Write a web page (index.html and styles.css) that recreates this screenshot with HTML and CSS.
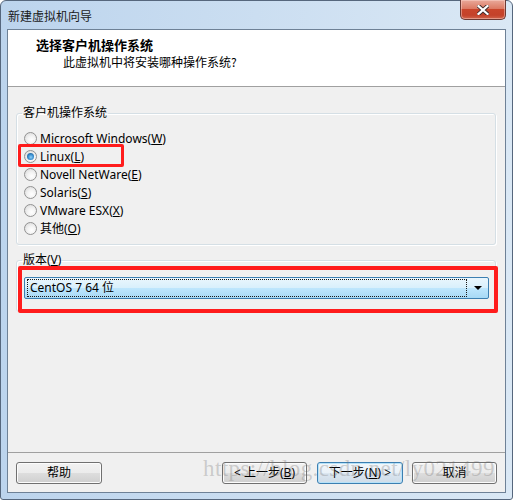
FILE: index.html
```html
<!DOCTYPE html>
<html lang="zh-CN">
<head>
<meta charset="utf-8">
<title>新建虚拟机向导</title>
<link rel="stylesheet" href="styles.css">
</head>
<body>
<div class="window">
  <div class="titlebar">
    <span class="title">新建虚拟机向导</span>
    <div class="close">
      <svg width="12" height="10" viewBox="0 0 12 10"><path d="M1.5 1 L10.5 9 M10.5 1 L1.5 9" stroke="#3b2a2a" stroke-width="4" stroke-linecap="square"/><path d="M1.5 1 L10.5 9 M10.5 1 L1.5 9" stroke="#ffffff" stroke-width="2.2" stroke-linecap="square"/></svg>
    </div>
  </div>
  <div class="client">
    <div class="header">
      <div class="h-title">选择客户机操作系统</div>
      <div class="h-sub">此虚拟机中将安装哪种操作系统?</div>
    </div>
    <div class="body">
      <fieldset class="group os">
        <legend>客户机操作系统</legend>
        <div class="radio"><span class="rb"></span>Microsoft Windows(<u>W</u>)</div>
        <div class="radio"><span class="rb checked"></span>Linux(<u>L</u>)</div>
        <div class="radio"><span class="rb"></span>Novell NetWare(<u>E</u>)</div>
        <div class="radio"><span class="rb"></span>Solaris(<u>S</u>)</div>
        <div class="radio"><span class="rb"></span>VMware ESX(<u>X</u>)</div>
        <div class="radio"><span class="rb"></span>其他(<u>O</u>)</div>
      </fieldset>
      <fieldset class="group ver">
        <legend>版本(<u>V</u>)</legend>
        <div class="combo">
          <div class="combo-text">CentOS 7 64 位</div>
          <div class="combo-arrow"></div>
        </div>
      </fieldset>
    </div>
    <div class="footer">
      <button class="btn help">帮助</button>
      <button class="btn prev">&lt; 上一步(<u>B</u>)</button>
      <button class="btn next">下一步(<u>N</u>) &gt;</button>
      <button class="btn cancel">取消</button>
    </div>
  </div>
  <div class="mark mark-linux"></div>
  <div class="mark mark-version"></div>
  <div class="watermark">https://blog.csdn.net/ly021499</div>
</div>
</body>
</html>
```
FILE: styles.css
```css
* { box-sizing: border-box; }
html, body { margin: 0; padding: 0; }
body {
  width: 513px;
  height: 500px;
  overflow: hidden;
  background: #ffffff;
  font-family: "Noto Sans", "Noto Sans CJK SC", sans-serif;
  font-size: 12px;
  color: #000;
}
.window {
  position: relative;
  width: 513px;
  height: 500px;
  display: flex;
  flex-direction: column;
  background: linear-gradient(to right, #bcd4ed, #dae8f5);
  border: 1px solid #56677d;
  border-radius: 6px 6px 3px 3px;
  padding: 0 6px 6px 6px;
}
.titlebar {
  height: 28px;
  display: flex;
  align-items: center;
  padding-left: 1px;
}
.title {
  font-family: "Noto Sans CJK SC", sans-serif;
  font-size: 12px;
  line-height: 14px;
  padding-top: 1px;
  color: #1a1a1a;
}
.close {
  margin-left: auto;
  align-self: flex-start;
  margin-top: -1px;
  width: 46px;
  height: 20px;
  border: 1px solid #6b3a34;
  border-top: none;
  border-radius: 0 0 5px 5px;
  background: linear-gradient(#e9a99a 0%, #dc7a64 45%, #c9452b 50%, #c4422a 80%, #d0654c 100%);
  box-shadow: inset 0 0 0 1px rgba(255, 220, 210, 0.45);
  display: flex;
  align-items: center;
  justify-content: center;
}
.client {
  flex: 1;
  display: flex;
  flex-direction: column;
  border: 1px solid #6e8196;
  background: #f0f0f0;
}
.header {
  height: 57px;
  background: #ffffff;
  border-bottom: 1px solid #a0a0a0;
  padding: 6px 0 0 28px;
}
.h-title {
  font-family: "Noto Sans CJK SC", sans-serif;
  font-weight: bold;
  font-size: 13px;
  line-height: 17px;
}
.h-sub {
  font-family: "Noto Sans CJK SC", sans-serif;
  font-size: 12px;
  line-height: 16px;
  margin-top: 1px;
  padding-left: 27px;
}
.body {
  flex: 1;
  padding: 19px 9px 0 8px;
}
.group {
  margin: 0;
  border: 1px solid #d5dfe5;
  border-radius: 3px;
  box-shadow: inset 1px 1px 0 #ffffff, 1px 1px 0 #ffffff;
  min-width: 0;
}
.group legend {
  padding: 0 1px;
  margin-left: -2px;
  font-size: 12px;
  line-height: 14px;
  color: #000;
}
.os {
  padding: 9px 6px 7px 7px;
}
.ver {
  margin-top: 8px;
  padding: 10px 6px 12px 7px;
}
.radio {
  height: 18px;
  display: flex;
  align-items: center;
  white-space: nowrap;
}
.rb {
  width: 13px;
  height: 13px;
  margin-right: 3px;
  border-radius: 50%;
  border: 1px solid #929292;
  background: radial-gradient(circle at 60% 65%, #ffffff 0%, #f3f3f3 40%, #d4d4d4 100%);
  display: flex;
  align-items: center;
  justify-content: center;
}
.rb.checked::after {
  content: "";
  width: 7px;
  height: 7px;
  border-radius: 50%;
  background: radial-gradient(circle at 55% 60%, #8fd0f7 0%, #3b8fd0 45%, #134a7c 100%);
}
.combo {
  height: 22px;
  display: flex;
  align-items: center;
  border: 1px solid #3c7fb1;
  border-radius: 2px;
  background: linear-gradient(#eaf6fd 0%, #d9f0fc 48%, #bee6fd 52%, #a7d9f5 100%);
  padding: 1px 2px;
}
.combo-text {
  flex: 1;
  height: 18px;
  line-height: 16px;
  padding-left: 2px;
  border: 1px dotted #1a1a1a;
  white-space: nowrap;
  font-size: 12px;
}
.combo-arrow {
  width: 19px;
  height: 18px;
  display: flex;
  align-items: center;
  justify-content: center;
}
.combo-arrow::after {
  content: "";
  border-left: 4px solid transparent;
  border-right: 4px solid transparent;
  border-top: 4px solid #000;
  margin-left: 2px;
}
.footer {
  height: 40px;
  border-top: 1px solid #a0a0a0;
  display: flex;
  align-items: flex-start;
  padding: 9px 8px 0 8px;
}
.btn {
  height: 22px;
  width: 85px;
  padding: 0;
  font-family: "Noto Sans", "Noto Sans CJK SC", sans-serif;
  font-size: 12px;
  line-height: 18px;
  color: #000;
  border: 1px solid #707070;
  border-radius: 3px;
  background: linear-gradient(#f2f2f2 0%, #ebebeb 50%, #dddddd 51%, #cfcfcf 100%);
  box-shadow: inset 0 0 0 1px #fcfcfc;
}
.help { width: 86px; }
.prev { margin-left: auto; }
.next {
  width: 86px;
  margin-left: 10px;
  border-color: #3c7fb1;
  background: linear-gradient(#f2f7fb 0%, #e9f1f8 50%, #dbe6f0 51%, #cfdce8 100%);
  box-shadow: inset 0 0 0 1px #b6e2f9;
}
.cancel { margin-left: 9px; }
.mark {
  position: absolute;
  border-color: #ff1c1c;
  border-style: solid;
  border-radius: 2px;
  pointer-events: none;
}
.mark-linux {
  left: 17px;
  top: 143px;
  width: 106px;
  height: 23px;
  border-width: 3px;
}
.mark-version {
  left: 17px;
  top: 265px;
  width: 480px;
  height: 47px;
  border-width: 4px;
}
.watermark {
  position: absolute;
  left: 202px;
  top: 455px;
  font-family: "Liberation Serif", serif;
  font-size: 23px;
  letter-spacing: 0.4px;
  color: rgba(110, 110, 110, 0.3);
  white-space: nowrap;
  pointer-events: none;
}
```
